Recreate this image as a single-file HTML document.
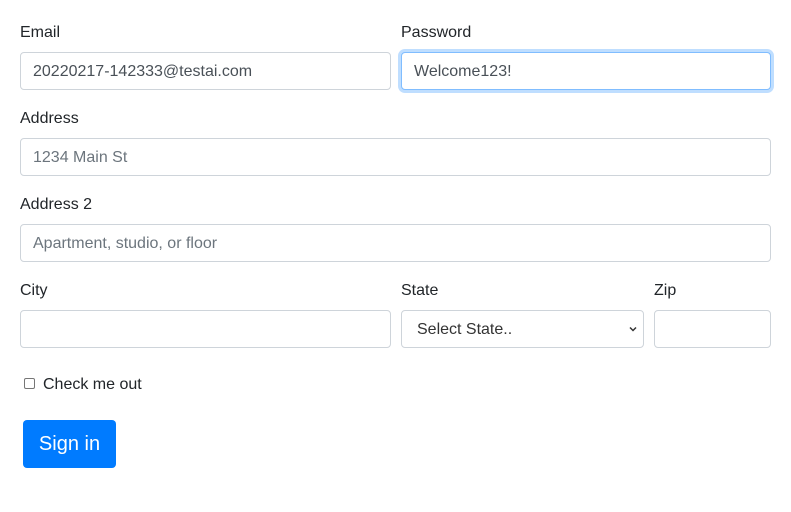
<!DOCTYPE html>
<html><head><style>
body{margin:0;background:#fff;font-family:"Liberation Sans",sans-serif;color:#212529;width:791px;height:512px;position:relative;overflow:hidden}
.l{position:absolute;font-size:16px;line-height:24px;margin-top:1px}
.i{position:absolute;box-sizing:border-box;height:38px;border:1px solid #ced4da;border-radius:4px;background:#fff;font-size:16px;line-height:37px;padding-left:12px;color:#495057}
.ph{color:#6c757d}
</style></head><body>
<div class="l" style="left:20px;top:20px">Email</div>
<div class="l" style="left:401px;top:20px">Password</div>
<div class="i" style="left:20px;top:52px;width:371px">20220217-142333@testai.com</div>
<div class="i" style="left:401px;top:52px;width:370px;border-color:#80bdff;box-shadow:0 0 0 3px rgba(0,123,255,.25)">Welcome123!</div>
<div class="l" style="left:20px;top:106px">Address</div>
<div class="i ph" style="left:20px;top:138px;width:751px">1234 Main St</div>
<div class="l" style="left:20px;top:192px">Address 2</div>
<div class="i ph" style="left:20px;top:224px;width:751px">Apartment, studio, or floor</div>
<div class="l" style="left:20px;top:278px">City</div>
<div class="l" style="left:401px;top:278px">State</div>
<div class="l" style="left:654px;top:278px">Zip</div>
<div class="i" style="left:20px;top:310px;width:371px"></div>
<div class="i" style="left:401px;top:310px;width:243px;padding-left:15px;color:#333">Select State..<svg style="position:absolute;right:6px;top:14px" width="8" height="8" viewBox="0 0 8 8"><path d="M1 2.5 L4 5.5 L7 2.5" fill="none" stroke="#333" stroke-width="1.5"/></svg></div>
<div class="i" style="left:654px;top:310px;width:117px"></div>
<div style="position:absolute;left:24px;top:378px;width:11px;height:11px;border:1px solid #767676;border-radius:2px;box-sizing:border-box"></div>
<div class="l" style="left:43px;top:372px">Check me out</div>
<div style="position:absolute;left:23px;top:420px;width:93px;height:48px;background:#007bff;border-radius:4px;color:#fff;font-size:20px;line-height:49px;text-align:center">Sign in</div>
</body></html>
